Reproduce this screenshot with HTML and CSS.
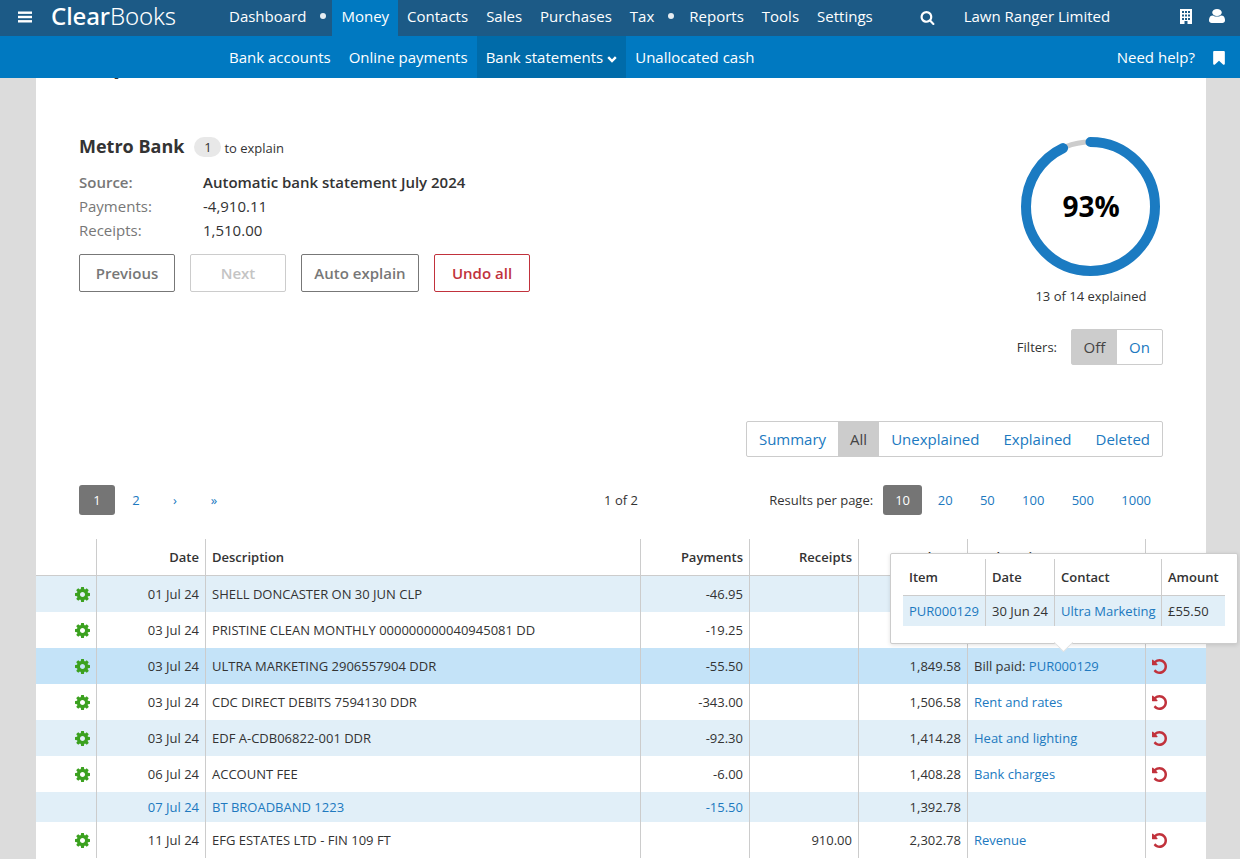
FILE: index.html
```html
<!DOCTYPE html>
<html lang="en">
<head>
<meta charset="utf-8">
<title>Clear Books - Bank statements</title>
<link rel="stylesheet" href="styles.css">
</head>
<body>
<header class="site-header">
  <div class="topbar">
    <svg class="ic-bars" viewBox="0 0 14 12"><rect width="14" height="2.4" y="0.5"/><rect width="14" height="2.4" y="4.8"/><rect width="14" height="2.4" y="9.1"/></svg>
    <a class="logo"><span class="logo-a">Clear</span><span class="logo-b">Books</span></a>
    <nav class="mainnav">
      <a>Dashboard</a><i class="dot"></i><a class="on">Money</a><a>Contacts</a><a>Sales</a><a>Purchases</a><a>Tax</a><i class="dot"></i><a>Reports</a><a>Tools</a><a>Settings</a>
    </nav>
    <svg class="ic-search" viewBox="0 0 1792 1792"><path d="M1216 832q0-185-131.5-316.5t-316.5-131.5-316.5 131.5-131.5 316.5 131.5 316.5 316.5 131.5 316.5-131.5 131.5-316.5zm512 832q0 52-38 90t-90 38q-54 0-90-38l-343-342q-179 124-399 124-143 0-273.5-55.5t-225-150-150-225-55.5-273.5 55.5-273.5 150-225 225-150 273.5-55.5 273.5 55.5 225 150 150 225 55.5 273.5q0 220-124 399l343 343q37 37 37 90z"/></svg>
    <span class="company">Lawn Ranger Limited</span>
    <svg class="ic-building" viewBox="0 0 12 15"><path fill-rule="evenodd" d="M0 0h12v15H7.5v-3h-3v3H0zM2 2v2h2V2zm3 0v2h2V2zm3 0v2h2V2zM2 5.500v2h2v-2zm3 0v2h2v-2zm3 0v2h2v-2zM2 9v2h2V9zm3 0v2h2V9zm3 0v2h2V9z"/></svg>
    <svg class="ic-user" viewBox="256 128 1280 1536" preserveAspectRatio="none"><path d="M1536 1399q0 109-62.500 187t-150.500 78h-854q-88 0-150.500-78t-62.500-187q0-85 8.500-160.500t31.500-152 58.500-131 94-89 134.500-34.500q131 128 313 128t313-128q76 0 134.500 34.500t94 89 58.500 131 31.500 152 8.500 160.500zm-256-887q0 159-112.500 271.500t-271.500 112.500-271.500-112.500-112.500-271.500 112.500-271.500 271.500-112.500 271.500 112.500 112.500 271.500z"/></svg>
  </div>
  <div class="subbar">
    <nav class="subnav">
      <a>Bank accounts</a><a>Online payments</a><a class="on">Bank statements <svg class="ic-chev" viewBox="0 0 10 7"><path d="M1.200 1.200 5 5l3.800-3.800"/></svg></a><a>Unallocated cash</a>
    </nav>
    <a class="help">Need help?</a>
    <svg class="ic-bookmark" viewBox="256 128 1280 1536"><path d="M1420 128q23 0 44 9 33 13 52.500 41t19.500 62v1289q0 34-19.500 62t-52.500 41q-19 8-44 8-48 0-83-32l-441-424-441 424q-36 33-83 33-23 0-44-9-33-13-52.500-41t-19.500-62v-1289q0-34 19.500-62t52.500-41q21-9 44-9h1048z"/></svg>
  </div>
</header>

<main class="card">
  <h1 class="page-title">Explain</h1>
  <section class="summary">
    <div class="info">
      <div class="bank-line"><h2>Metro Bank</h2><span class="pill">1</span><span class="to-explain">to explain</span></div>
      <dl class="facts">
        <dt class="strong-label">Source:</dt><dd class="strong">Automatic bank statement July 2024</dd>
        <dt>Payments:</dt><dd>-4,910.11</dd>
        <dt>Receipts:</dt><dd>1,510.00</dd>
      </dl>
      <div class="actions">
        <button class="btn">Previous</button><button class="btn off">Next</button><button class="btn">Auto explain</button><button class="btn danger">Undo all</button>
      </div>
    </div>
    <div class="progress">
      <div class="ring">
        <svg viewBox="0 0 140 140"><circle class="track" cx="69.500" cy="69.500" r="64.500"/><circle class="bar" cx="69.500" cy="69.500" r="64.500" pathLength="100" stroke-dasharray="93 100" transform="rotate(-90 69.500 69.500)"/></svg>
        <span class="pct">93%</span>
      </div>
      <p class="explained">13 of 14 explained</p>
    </div>
  </section>

  <div class="filters"><span class="filters-label">Filters:</span><div class="seg"><a class="sel">Off</a><a>On</a></div></div>

  <div class="tabs-row"><div class="seg tabs"><a>Summary</a><a class="sel">All</a><a>Unexplained</a><a>Explained</a><a>Deleted</a></div></div>

  <div class="pager-row">
    <div class="pager"><a class="cur">1</a><a>2</a><a>›</a><a>»</a></div>
    <div class="pageof">1 of 2</div>
    <div class="perpage"><span class="perpage-label">Results per page:</span><a class="cur">10</a><a>20</a><a>50</a><a>100</a><a>500</a><a>1000</a></div>
  </div>

  <div class="table-wrap">
    <table class="lines">
      <colgroup><col class="c-ic"><col class="c-num"><col class="c-desc"><col class="c-num"><col class="c-num"><col class="c-num"><col class="c-exp"><col class="c-undo"></colgroup>
      <thead><tr><th></th><th class="r">Date</th><th>Description</th><th class="r">Payments</th><th class="r">Receipts</th><th class="r">Balance</th><th>Explanation</th><th></th></tr></thead>
      <tbody>
        <tr class="tint"><td class="ic"><svg class="ic-cog" viewBox="128 128 1536 1536"><use href="#cog"/></svg></td><td class="r">01 Jul 24</td><td>SHELL DONCASTER ON 30 JUN CLP</td><td class="r">-46.95</td><td></td><td class="r">1,971.28</td><td><a>Motor expenses</a></td><td></td></tr>
        <tr><td class="ic"><svg class="ic-cog" viewBox="128 128 1536 1536"><use href="#cog"/></svg></td><td class="r">03 Jul 24</td><td>PRISTINE CLEAN MONTHLY 000000000040945081 DD</td><td class="r">-19.25</td><td></td><td class="r">1,924.33</td><td><a>Cleaning</a></td><td></td></tr>
        <tr class="hl"><td class="ic"><svg class="ic-cog" viewBox="128 128 1536 1536"><use href="#cog"/></svg></td><td class="r">03 Jul 24</td><td>ULTRA MARKETING 2906557904 DDR</td><td class="r">-55.50</td><td></td><td class="r">1,849.58</td><td>Bill paid: <a>PUR000129</a></td><td class="un"><svg class="ic-undo" viewBox="128 128 1536 1536"><use href="#undo"/></svg></td></tr>
        <tr><td class="ic"><svg class="ic-cog" viewBox="128 128 1536 1536"><use href="#cog"/></svg></td><td class="r">03 Jul 24</td><td>CDC DIRECT DEBITS 7594130 DDR</td><td class="r">-343.00</td><td></td><td class="r">1,506.58</td><td><a>Rent and rates</a></td><td class="un"><svg class="ic-undo" viewBox="128 128 1536 1536"><use href="#undo"/></svg></td></tr>
        <tr class="tint"><td class="ic"><svg class="ic-cog" viewBox="128 128 1536 1536"><use href="#cog"/></svg></td><td class="r">03 Jul 24</td><td>EDF A-CDB06822-001 DDR</td><td class="r">-92.30</td><td></td><td class="r">1,414.28</td><td><a>Heat and lighting</a></td><td class="un"><svg class="ic-undo" viewBox="128 128 1536 1536"><use href="#undo"/></svg></td></tr>
        <tr><td class="ic"><svg class="ic-cog" viewBox="128 128 1536 1536"><use href="#cog"/></svg></td><td class="r">06 Jul 24</td><td>ACCOUNT FEE</td><td class="r">-6.00</td><td></td><td class="r">1,408.28</td><td><a>Bank charges</a></td><td class="un"><svg class="ic-undo" viewBox="128 128 1536 1536"><use href="#undo"/></svg></td></tr>
        <tr class="tint short"><td></td><td class="r"><a>07 Jul 24</a></td><td><a>BT BROADBAND 1223</a></td><td class="r"><a>-15.50</a></td><td></td><td class="r">1,392.78</td><td></td><td></td></tr>
        <tr><td class="ic"><svg class="ic-cog" viewBox="128 128 1536 1536"><use href="#cog"/></svg></td><td class="r">11 Jul 24</td><td>EFG ESTATES LTD - FIN 109 FT</td><td></td><td class="r">910.00</td><td class="r">2,302.78</td><td><a>Revenue</a></td><td class="un"><svg class="ic-undo" viewBox="128 128 1536 1536"><use href="#undo"/></svg></td></tr>
      </tbody>
    </table>
    <div class="popover">
      <table class="pop-table">
        <colgroup><col class="p1"><col class="p2"><col class="p3"><col class="p4"></colgroup>
        <thead><tr><th>Item</th><th>Date</th><th>Contact</th><th>Amount</th></tr></thead>
        <tbody><tr><td><a>PUR000129</a></td><td>30 Jun 24</td><td><a>Ultra Marketing</a></td><td>£55.50</td></tr></tbody>
      </table>
    </div>
  </div>
</main>

<svg class="defs" aria-hidden="true"><defs>
  <path id="cog" fill-rule="evenodd" d="M1152 896q0-106-75-181t-181-75-181 75-75 181 75 181 181 75 181-75 75-181zm512-109v222q0 12-8 23t-20 13l-185 28q-19 54-39 91 35 50 107 138 10 12 10 25t-9 23q-27 37-99 108t-94 71q-12 0-26-9l-138-108q-44 23-91 38-16 136-29 186-7 28-36 28h-222q-14 0-24.500-8.500t-11.500-21.500l-28-184q-49-16-90-37l-141 107q-10 9-25 9-14 0-25-11-126-114-165-168-7-10-7-23 0-12 8-23 15-21 51-66.500t54-70.500q-27-50-41-99l-183-27q-13-2-21-12.500t-8-23.500v-222q0-12 8-23t19-13l186-28q14-46 39-92-40-57-107-138-10-12-10-24 0-10 9-23 26-36 98.500-107.500t94.500-71.500q13 0 26 10l138 107q44-23 91-38 16-136 29-186 7-28 36-28h222q14 0 24.500 8.500t11.500 21.500l28 184q49 16 90 37l142-107q9-9 24-9 13 0 25 10 129 119 165 170 7 8 7 22 0 12-8 23-15 21-51 66.500t-54 70.500q26 50 41 98l183 28q13 2 21 12.500t8 23.500z"/>
  <path id="undo" d="M1664 896q0 156-61 298t-164 245-245 164-298 61q-172 0-327-72.500t-264-204.500q-7-10-6.500-22.500t8.500-20.500l137-138q10-9 25-9 16 2 23 12 73 95 179 147t225 52q104 0 198.500-40.500t163.500-109.500 109.500-163.500 40.500-198.500-40.500-198.500-109.500-163.500-163.500-109.500-198.500-40.500q-98 0-188 35.500t-160 101.500l137 138q31 30 14 69-17 40-59 40h-448q-26 0-45-19t-19-45v-448q0-42 40-59 39-17 69 14l130 129q107-101 244.500-156.500t284.500-55.500q156 0 298 61t245 164 164 245 61 298z"/>
</defs></svg>
</body>
</html>
```
FILE: styles.css
```css
* { box-sizing: border-box; }
html, body { height: 100%; overflow: hidden; }
body { margin: 0; background: #dcdcdc; font-family: "Open Sans", "Noto Sans", sans-serif; color: #333; font-size: 13px; }
a { color: #2079bf; text-decoration: none; }
.defs { width: 0; height: 0; display: block; }

.site-header { position: relative; z-index: 5; height: 78px; }
.topbar { height: 36px; background: #1c5a86; display: flex; align-items: center; color: #fff; padding-left: 18px; }
.topbar svg { fill: #fff; flex: none; }
.ic-bars { width: 14px; height: 12px; margin-bottom: 2px; }
.logo { width: 169px; margin-left: 19px; color: #fff; font-size: 24px; line-height: 32px; height: 36px; letter-spacing: -0.1px; font-family: "Noto Sans", "Open Sans", sans-serif; }
.logo-a { font-weight: 500; }
.logo-b { font-weight: 300; }
.mainnav { display: flex; align-items: center; height: 36px; }
.mainnav a, .subnav a { color: #fff; font-size: 15px; padding: 0 9px; display: flex; align-items: center; }
.mainnav a { height: 36px; padding-bottom: 4px; }
.mainnav a.on { background: #0079c1; }
.dot { width: 17px; height: 36px; position: relative; display: block; }
.dot::after { content: ""; position: absolute; left: 5px; top: 13px; width: 6px; height: 6px; border-radius: 50%; background: #e6edf2; }
.ic-search { width: 15px; height: 15px; margin-left: 38px; margin-bottom: 2px; }
.company { font-size: 15px; margin-left: 29px; padding-bottom: 4px; }
.ic-building { width: 12px; height: 15px; margin-left: 70px; margin-bottom: 3px; }
.ic-user { width: 16px; height: 14px; margin-left: 17px; margin-bottom: 4px; }
.subbar { height: 42px; background: #0079c1; display: flex; align-items: stretch; padding-left: 220px; color: #fff; }
.subnav { display: flex; }
.subnav a.on { background: #006ba9; gap: 4px; }
.ic-chev { width: 10px; height: 7px; fill: none; stroke: #fff; stroke-width: 2.4; margin-top: 4px; }
.help { color: #fff; font-size: 15px; margin-left: auto; align-self: center; }
.ic-bookmark { width: 12px; height: 14px; fill: #fff; align-self: center; margin: 1px 15px 0 18px; }

.card { width: 1170px; margin-left: 36px; background: #fff; padding: 0 43px; height: 820px; position: relative; }
.page-title { margin: -35px 0 0; font-size: 30px; line-height: 36px; font-weight: 600; height: 36px; }
.summary { display: flex; justify-content: space-between; margin-top: 58px; height: 172px; }
.bank-line { display: flex; align-items: center; height: 24px; margin-top: -3px; }
.bank-line h2 { font-size: 18px; font-weight: 700; margin: 0; line-height: 24px; }
.pill { width: 27px; height: 20px; border-radius: 10px; background: #e8e8e8; text-align: center; line-height: 20px; margin: 2px 3px 0 10px; font-size: 13px; }
.to-explain { font-size: 13px; margin-top: 3px; }
.facts { display: grid; grid-template-columns: 124px auto; margin: 12px 0 0; font-size: 15px; line-height: 24px; }
.facts dt { color: #777; }
.facts dt.strong-label { font-weight: 600; }
.facts dd { margin: 0; }
.facts dd.strong { font-weight: 600; }
.actions { display: flex; gap: 15px; margin-top: 12px; }
.btn { height: 38px; width: 96px; font: 600 15px "Open Sans", sans-serif; color: #777; background: #fff; border: 1px solid #777; border-radius: 2px; padding: 0; }
.btn.off { color: #c4c4c4; border-color: #ccc; }
.btn:nth-child(3) { width: 118px; }
.btn.danger { color: #c1323c; border-color: #c1323c; }
.progress { width: 140px; margin-right: 2px; text-align: center; }
.ring { position: relative; width: 140px; height: 140px; }
.ring svg { width: 140px; height: 140px; display: block; }
.track { fill: none; stroke: #ccc; stroke-width: 5; }
.bar { fill: none; stroke: #1b7bc2; stroke-width: 10; stroke-linecap: round; }
.pct { position: absolute; inset: 0 0 2px; display: flex; align-items: center; justify-content: center; font-size: 28px; font-weight: 700; color: #000; }
.explained { margin: 9px -5px 0; font-size: 13px; line-height: 20px; white-space: nowrap; }

.filters { display: flex; justify-content: flex-end; align-items: center; gap: 14px; height: 36px; margin-top: 20px; }
.filters-label { font-size: 13px; }
.seg { display: flex; border: 1px solid #ccc; border-radius: 2px; height: 36px; }
.seg a { font-size: 15px; padding: 0 12px; display: flex; align-items: center; }
.filters .seg a { width: 45px; padding: 0; justify-content: center; }
.seg a.sel { background: #ccc; color: #444; }
.tabs-row { display: flex; justify-content: flex-end; margin-top: 56px; }
.pager-row { display: grid; grid-template-columns: 1fr auto 1fr; align-items: center; height: 30px; margin-top: 28px; font-size: 13px; }
.pager, .perpage { display: flex; align-items: center; }
.pager { gap: 3px; }
.pager a, .perpage a { height: 30px; display: flex; align-items: center; justify-content: center; }
.pager a { width: 36px; }
.cur { background: #757575; color: #fff !important; border-radius: 3px; }
.perpage { justify-content: flex-end; }
.perpage-label { margin-right: 10px; }
.perpage a { padding: 0 13.65px; }
.perpage a.cur { width: 39px; padding: 0; margin-right: 2px; }
.perpage a:last-child { padding-right: 12px; }

.table-wrap { margin: 24px -43px 0; position: relative; }
.lines { width: 1170px; table-layout: fixed; border-collapse: separate; border-spacing: 0; font-size: 13px; }
.c-ic { width: 60px; }
.c-num { width: 109px; }
.c-desc { width: 435px; }
.c-exp { width: 178px; }
.c-undo { width: 61px; }
.lines th, .lines td { padding: 0 6px; text-align: left; font-weight: 400; white-space: nowrap; overflow: hidden; }
.lines th + th, .lines td + td { border-left: 1px solid #ccc; }
.lines th { height: 37px; border-bottom: 1px solid #ccc; font-weight: 600; }
.lines td { height: 36px; }
.lines .r { text-align: right; }
.lines .ic { text-align: right; line-height: 0; }
.lines .un { line-height: 0; }
.tint { background: #e1eff8; }
.hl { background: #c4e3f8; }
.lines .short td { height: 30px; }
.ic-cog { width: 15px; height: 15px; fill: #3ba11f; }
.ic-undo { width: 15px; height: 15px; fill: #c1323c; }

.popover { position: absolute; left: 854px; top: 14px; width: 348px; height: 91px; background: #fff; border: 1px solid #ccc; border-radius: 2px; box-shadow: 0 1px 4px rgba(0,0,0,.12); padding: 5px 12px 0; z-index: 3; }
.popover::after { content: ""; position: absolute; left: 164px; bottom: -8px; width: 16px; height: 16px; background: #fff; border-right: 1px solid #ddd; border-bottom: 1px solid #ddd; transform: rotate(45deg) scale(.8); }
.pop-table { width: 322px; table-layout: fixed; border-collapse: separate; border-spacing: 0; font-size: 13px; }
.p1 { width: 82px; } .p2 { width: 69px; } .p3 { width: 107px; } .p4 { width: 64px; }
.pop-table th, .pop-table td { padding: 0 6px; text-align: left; white-space: nowrap; }
.pop-table th + th, .pop-table td + td { border-left: 1px solid #ccc; }
.pop-table th { height: 37px; border-bottom: 1px solid #ccc; font-weight: 600; }
.pop-table td { height: 30px; background: #e1eff8; }
```
